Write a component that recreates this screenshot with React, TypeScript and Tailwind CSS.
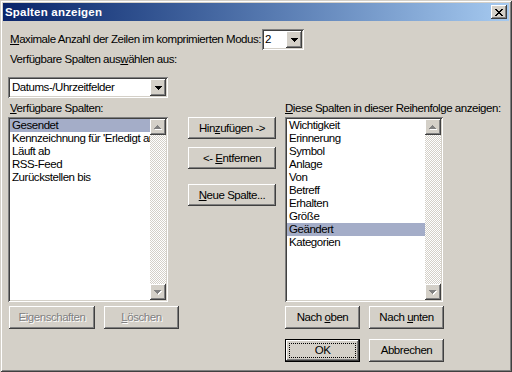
import React from "react";

const RAISED =
  "shadow-[inset_-1px_-1px_#404040,inset_1px_1px_#ffffff,inset_-2px_-2px_#808080,inset_2px_2px_#d4d0c8]";
const SUNKEN =
  "shadow-[inset_1px_1px_#808080,inset_-1px_-1px_#ffffff,inset_2px_2px_#404040,inset_-2px_-2px_#d4d0c8]";

function DownBlack() {
  return (
    <svg width="7" height="4" viewBox="0 0 7 4" shapeRendering="crispEdges">
      <rect x="0" y="0" width="7" height="1" fill="#000" />
      <rect x="1" y="1" width="5" height="1" fill="#000" />
      <rect x="2" y="2" width="3" height="1" fill="#000" />
      <rect x="3" y="3" width="1" height="1" fill="#000" />
    </svg>
  );
}

function GrayArrow({ up }: { up: boolean }) {
  const rows = up ? [1, 3, 5, 7] : [7, 5, 3, 1];
  return (
    <svg width="8" height="5" viewBox="0 0 8 5" shapeRendering="crispEdges">
      {rows.map((w, i) => (
        <rect key={"w" + i} x={(7 - w) / 2 + 1} y={i + 1} width={w} height="1" fill="#ffffff" />
      ))}
      {rows.map((w, i) => (
        <rect key={"g" + i} x={(7 - w) / 2} y={i} width={w} height="1" fill="#808080" />
      ))}
    </svg>
  );
}

function CloseX() {
  const rows = [0, 1, 2, 3, 4, 5, 6];
  return (
    <svg width="8" height="7" viewBox="0 0 8 7" shapeRendering="crispEdges">
      {rows.map((y) => (
        <React.Fragment key={y}>
          <rect x={y} y={y} width="2" height="1" fill="#000" />
          <rect x={6 - y} y={y} width="2" height="1" fill="#000" />
        </React.Fragment>
      ))}
    </svg>
  );
}

function Scrollbar() {
  return (
    <div className="w-[16px] flex flex-col">
      <div className={`w-[16px] h-[16px] bg-[#d4d0c8] flex items-center justify-center ${RAISED}`}>
        <GrayArrow up />
      </div>
      <div className="flex-1 bg-[repeating-conic-gradient(#d4d0c8_0_25%,#ffffff_0_50%)] bg-[length:2px_2px]" />
      <div className={`w-[16px] h-[16px] bg-[#d4d0c8] flex items-center justify-center ${RAISED}`}>
        <GrayArrow up={false} />
      </div>
    </div>
  );
}

function ListBox({ items, selected, widthClass }: { items: string[]; selected: number; widthClass: string }) {
  return (
    <div className={`${widthClass} h-[185px] bg-white p-[2px] flex ${SUNKEN}`}>
      <div className="flex-1 min-w-0 overflow-hidden">
        {items.map((it, i) => (
          <div
            key={it}
            className={`h-[13px] leading-[13px] pl-[2px] whitespace-nowrap overflow-hidden ${
              i === selected ? "bg-[#a4adc8]" : ""
            }`}
          >
            {it}
          </div>
        ))}
      </div>
      <Scrollbar />
    </div>
  );
}

function Btn({
  cls,
  children,
  disabled,
}: {
  cls: string;
  children: React.ReactNode;
  disabled?: boolean;
}) {
  return (
    <div
      className={`${cls} bg-[#d4d0c8] flex items-center justify-center leading-[13px] whitespace-nowrap ${RAISED} ${
        disabled ? "text-[#808080] [text-shadow:1px_1px_0_#ffffff]" : "text-black"
      }`}
    >
      {children}
    </div>
  );
}

export default function App() {
  return (
    <div
      className="w-[512px] h-[372px] bg-[#d4d0c8] p-[3px] flex flex-col text-black shadow-[inset_1px_1px_#d4d0c8,inset_-1px_-1px_#404040,inset_2px_2px_#ffffff,inset_-2px_-2px_#808080]"
      style={{ fontFamily: '"Liberation Sans", Arial, sans-serif' }}
    >
      {/* Title bar */}
      <div className="h-[18px] bg-linear-to-r from-[#0a246a] to-[#a6caf0] flex items-center pl-[2px] pr-[2px]">
        <div className="text-white font-bold text-[11.5px] leading-[13px] tracking-[0.2px] flex-1">
          Spalten anzeigen
        </div>
        <div className={`w-[16px] h-[14px] bg-[#d4d0c8] flex items-center justify-center ${RAISED}`}>
          <CloseX />
        </div>
      </div>

      {/* Body */}
      <div className="px-[5px] text-[11.5px] tracking-[-0.45px] flex flex-col">
        {/* Row 1 */}
        <div className="mt-[8px] h-[21px] flex items-center">
          <div className="w-[254px] pl-[2px] leading-[13px] whitespace-nowrap">
            <u>M</u>aximale Anzahl der Zeilen im komprimierten Modus:
          </div>
          <div className={`w-[42px] h-[21px] bg-white p-[2px] flex ${SUNKEN}`}>
            <div className="flex-1 pl-[1px] leading-[17px]">2</div>
            <div className={`w-[16px] h-[17px] bg-[#d4d0c8] flex items-center justify-center ${RAISED}`}>
              <DownBlack />
            </div>
          </div>
        </div>

        {/* Row 2 */}
        <div className="mt-[3px] h-[13px] leading-[13px] pl-[2px] whitespace-nowrap">
          Verfügbare Spalten aus<u>w</u>ählen aus:
        </div>
        <div className={`mt-[11px] w-[160px] h-[21px] bg-white p-[2px] flex ${SUNKEN}`}>
          <div className="flex-1 pl-[2px] leading-[17px] whitespace-nowrap">Datums-/Uhrzeitfelder</div>
          <div className={`w-[16px] h-[17px] bg-[#d4d0c8] flex items-center justify-center ${RAISED}`}>
            <DownBlack />
          </div>
        </div>

        {/* Main area */}
        <div className="mt-[4px] flex">
          {/* Left column */}
          <div className="w-[171px] flex flex-col">
            <div className="h-[13px] leading-[13px] pl-[2px] whitespace-nowrap">
              <u>V</u>erfügbare Spalten:
            </div>
            <div className="mt-[2px]">
              <ListBox
                widthClass="w-[160px]"
                selected={0}
                items={["Gesendet", "Kennzeichnung für 'Erledigt am'", "Läuft ab", "RSS-Feed", "Zurückstellen bis"]}
              />
            </div>
            <div className="mt-[4px] flex gap-[9px] pl-[1px]">
              <Btn cls="w-[86px] h-[23px]" disabled>
                Eigenschaften
              </Btn>
              <Btn cls="w-[75px] h-[23px]" disabled>
                <span>
                  <u>L</u>öschen
                </span>
              </Btn>
            </div>
          </div>

          {/* Middle column */}
          <div className="ml-[9px] pt-[15px] flex flex-col">
            <Btn cls="w-[88px] h-[22px]">
              <span>
                Hin<u>z</u>ufügen -&gt;
              </span>
            </Btn>
            <div className="mt-[8px]">
              <Btn cls="w-[88px] h-[22px]">
                <span>
                  &lt;- <u>E</u>ntfernen
                </span>
              </Btn>
            </div>
            <div className="mt-[15px]">
              <Btn cls="w-[88px] h-[22px]">
                <span>
                  <u>N</u>eue Spalte...
                </span>
              </Btn>
            </div>
          </div>

          {/* Right column */}
          <div className="ml-[9px] flex flex-col">
            <div className="h-[13px] leading-[13px] whitespace-nowrap">
              <u>D</u>iese Spalten in dieser Reihenfolge anzeigen:
            </div>
            <div className="mt-[2px]">
              <ListBox
                widthClass="w-[158px]"
                selected={8}
                items={[
                  "Wichtigkeit",
                  "Erinnerung",
                  "Symbol",
                  "Anlage",
                  "Von",
                  "Betreff",
                  "Erhalten",
                  "Größe",
                  "Geändert",
                  "Kategorien",
                ]}
              />
            </div>
            <div className="mt-[4px] flex gap-[9px]">
              <Btn cls="w-[75px] h-[23px]">
                <span>
                  Nach <u>o</u>ben
                </span>
              </Btn>
              <Btn cls="w-[75px] h-[23px]">
                <span>
                  Nach <u>u</u>nten
                </span>
              </Btn>
            </div>
            <div className="mt-[10px] flex gap-[9px]">
              <div className="w-[75px] h-[23px] bg-[#d4d0c8] flex p-[4px] shadow-[inset_0_0_0_1px_#000000,inset_-2px_-2px_#404040,inset_2px_2px_#ffffff,inset_-3px_-3px_#808080]">
                <div className="flex-1 border border-dotted border-black flex items-center justify-center leading-[13px]">
                  OK
                </div>
              </div>
              <Btn cls="w-[75px] h-[23px]">Abbrechen</Btn>
            </div>
          </div>
        </div>
      </div>
    </div>
  );
}
